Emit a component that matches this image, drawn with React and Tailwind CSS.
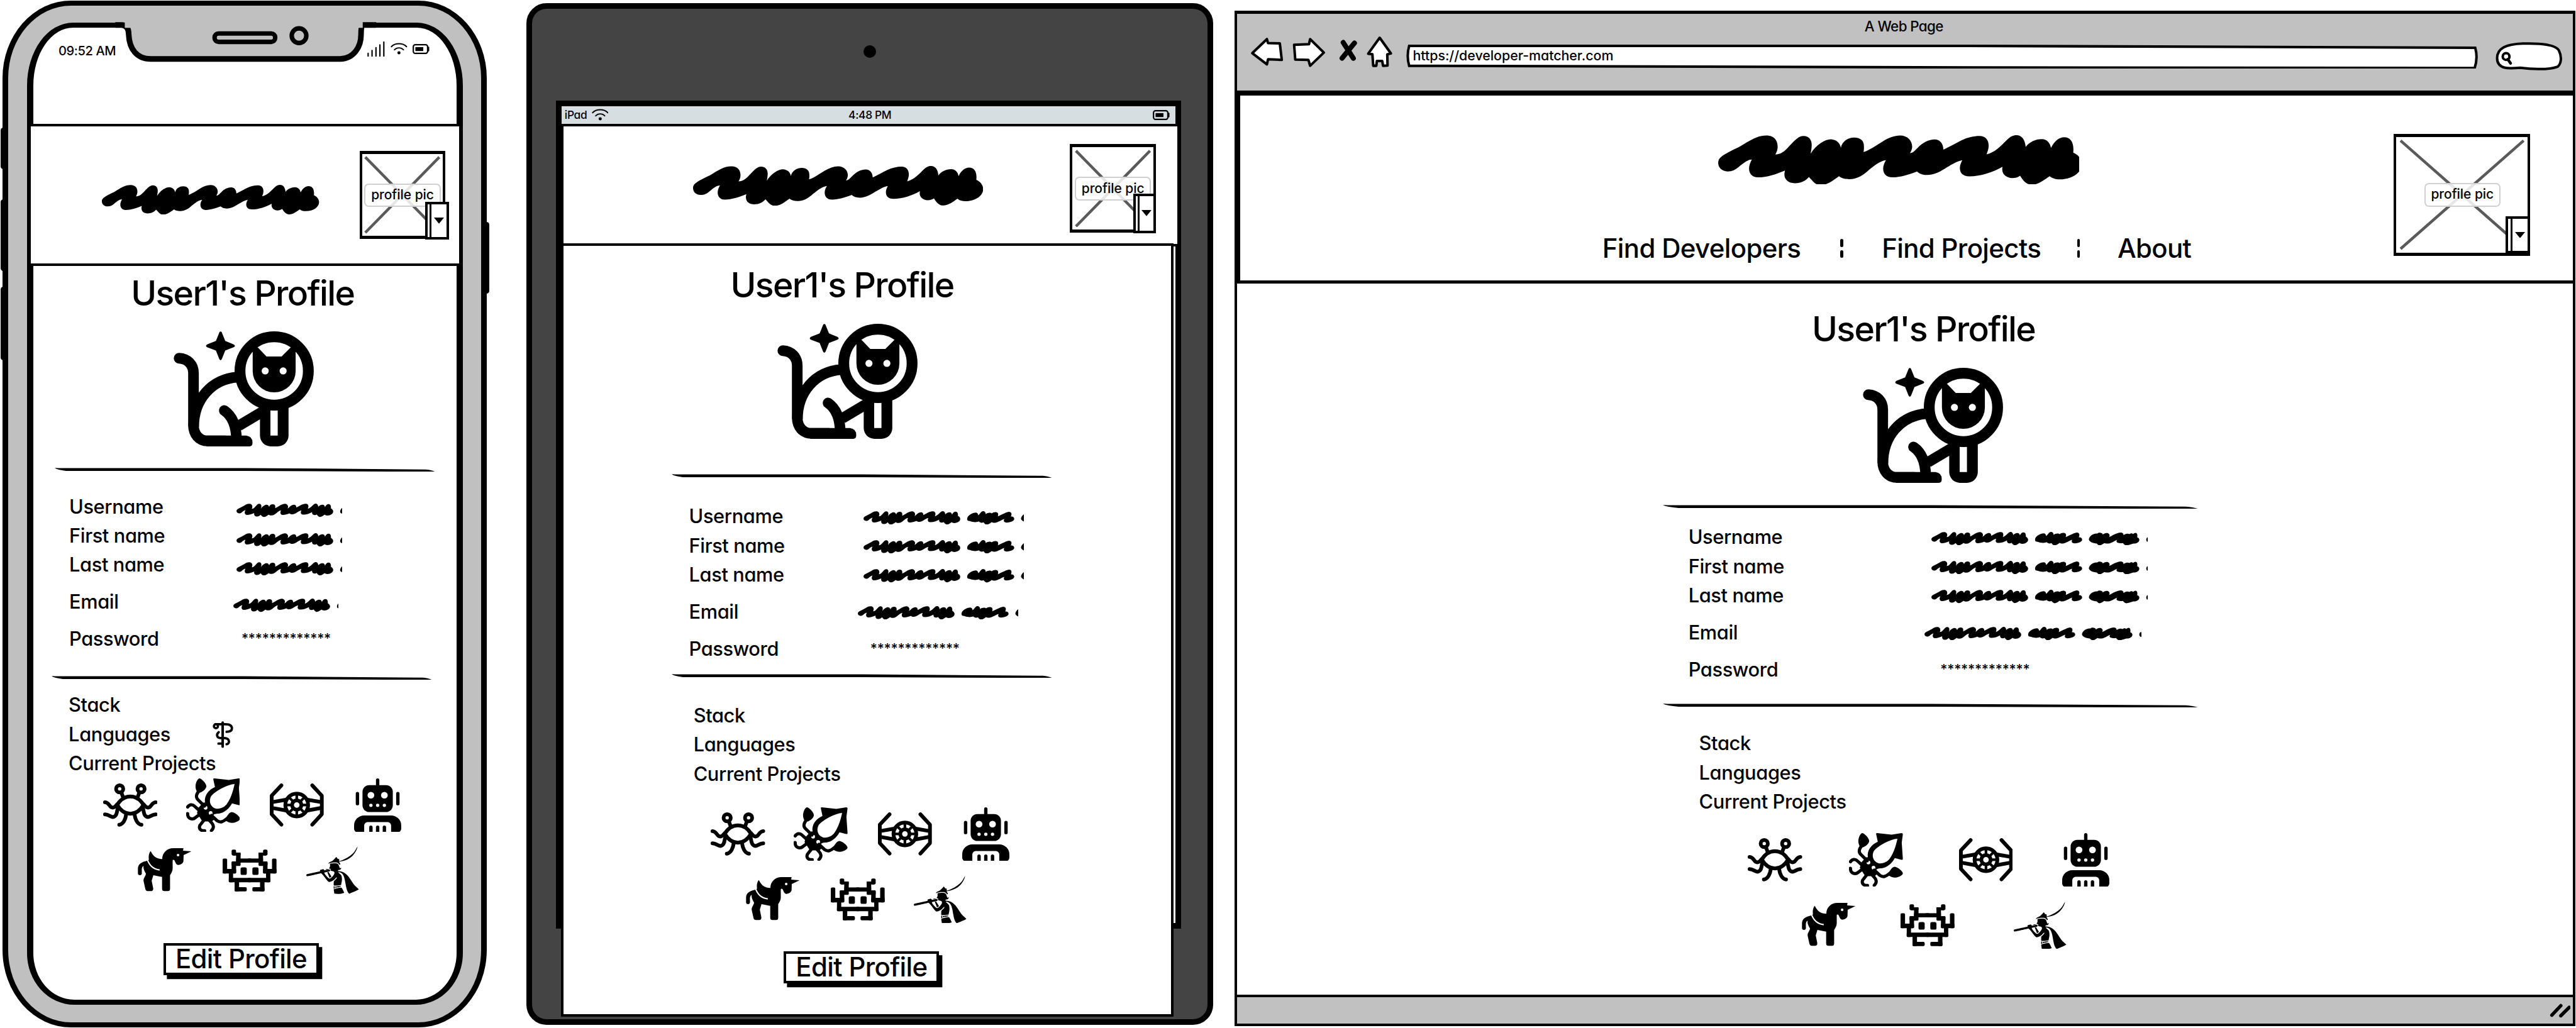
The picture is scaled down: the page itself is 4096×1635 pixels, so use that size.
import React from "react";
import { FaPiedPiperAlt } from "react-icons/fa";

/* ---------- scribbled placeholder text ---------- */

const SCRIBBLE =
  "M18 208 C18 180 40 165 130 122 C190 85 225 60 275 60 C320 60 336 90 336 120 C336 140 328 155 323 162 C350 162 370 150 400 115 C430 82 450 62 474 62 C505 62 518 85 518 110 C518 130 514 148 512 158 C540 110 590 80 620 80 C650 82 668 98 674 126 C680 90 715 71 745 71 C780 71 797 90 797 115 C798 130 797 140 795 149 C830 138 870 108 900 90 C930 72 960 60 990 60 C1030 60 1055 88 1055 120 C1055 135 1048 148 1043 155 C1060 155 1070 140 1085 126 C1110 98 1145 81 1175 81 C1205 81 1221 105 1222 136 C1260 118 1290 100 1320 85 C1350 70 1385 62 1415 62 C1448 62 1464 85 1464 115 C1464 135 1456 150 1453 162 C1500 150 1530 115 1560 85 C1580 65 1595 58 1613 58 C1640 58 1658 80 1662 122 C1680 95 1715 79 1747 79 C1775 79 1793 100 1797 127 C1815 90 1840 69 1868 69 C1900 69 1922 95 1916 152 C1945 165 1962 190 1962 215 C1962 260 1910 297 1843 297 C1820 297 1800 290 1790 280 C1760 300 1730 326 1694 326 C1665 326 1645 300 1632 277 C1620 286 1605 290 1590 290 C1555 288 1530 265 1538 229 C1490 258 1420 281 1361 281 C1325 280 1310 262 1310 235 C1310 220 1317 205 1323 193 C1290 200 1270 215 1240 232 C1210 252 1175 273 1135 273 C1110 273 1092 265 1081 254 C1040 270 990 286 950 286 C915 286 900 265 900 238 C900 220 908 205 915 193 C880 198 850 225 825 245 C795 272 765 296 718 296 C695 296 675 290 664 280 C635 300 605 328 565 328 C535 328 520 300 503 284 C485 305 460 318 428 318 C395 318 372 300 372 270 C372 262 374 254 375 249 C330 268 280 286 230 286 C200 286 183 265 183 238 C183 220 190 205 198 190 C175 190 155 208 130 228 C110 245 95 254 68 254 C40 254 18 235 18 208Z";

function TitleScribble({ className }) {
  return (
    <svg viewBox="18 58 1944 270" preserveAspectRatio="none" className={`block shrink-0 ${className}`}>
      <path d={SCRIBBLE} />
    </svg>
  );
}

function LineScribble({ className }) {
  return (
    <div className={`h-[24px] shrink-0 overflow-hidden ${className}`}>
      <svg viewBox="61 48 1200 72" className="block h-[24px] w-[400px]">
        <g transform="translate(56.2 32.5) scale(0.266)">
          <path d={SCRIBBLE} />
        </g>
        <path d="M615 90 C616 70 645 55 665 56 C672 58 675 66 674 70 C682 66 690 48 700 48 C712 48 715 58 714 64 C725 55 740 54 747 60 C755 52 775 50 780 60 C782 66 781 72 779 76 C800 66 830 50 840 51 C855 52 854 66 849 77 C860 76 867 82 867 90 C866 100 850 108 825 109 C812 109 808 100 814 90 C800 94 780 108 765 110 C757 111 750 109 746 107 C738 114 728 120 720 120 C710 119 706 112 703 108 C693 112 683 110 678 103 C665 109 645 107 630 101 C620 101 615 98 615 90Z" />
        <path d="M903 88 C906 68 930 55 948 57 C955 50 975 51 978 62 C985 54 1002 50 1010 58 C1016 64 1014 72 1011 76 C1025 70 1050 51 1075 51 C1088 52 1089 62 1088 66 C1098 56 1112 55 1120 60 C1130 52 1138 56 1139 60 C1150 48 1162 52 1162 64 C1163 72 1162 75 1161 77 C1170 80 1173 85 1173 92 C1170 106 1155 112 1142 110 C1130 112 1115 120 1103 120 C1092 118 1088 112 1086 108 C1070 110 1050 108 1051 98 C1051 95 1053 92 1055 90 C1040 95 1025 109 1008 110 C1000 111 990 110 985 108 C978 114 968 120 960 120 C952 119 948 112 945 110 C925 108 905 100 903 88Z" />
        <ellipse cx="1223" cy="89" rx="13" ry="13" />
      </svg>
    </div>
  );
}

/* ---------- icons ---------- */

function SpaceCat({ className }) {
  return (
    <svg viewBox="24 94 750 616" className={`block h-[205px] w-[250px] shrink-0 ${className}`}>
      <path d="M275 95 Q281 95 283 103 L300 145 L343 163 Q352 167 352 172 Q352 177 343 180 L300 197 L283 240 Q280 249 275 249 Q270 249 267 240 L250 197 L205 180 Q197 177 197 172 Q197 167 205 163 L250 145 L267 103 Q269 95 275 95Z" />
      <circle cx="562" cy="306" r="183" fill="none" stroke="black" strokeWidth="58" />
      <path d="M447 165 L475 181 L521 229 H602 L650 181 L677 165 V306 A115 115 0 0 1 447 306Z" />
      <circle cx="514" cy="306" r="19" fill="white" />
      <circle cx="610" cy="306" r="19" fill="white" />
      <g fill="none" stroke="black" strokeWidth="57">
        <path strokeLinecap="round" d="M53 238 C98 240 130 272 130 318 V596 C130 645 160 681 205 681 H300" />
        <path d="M131 605 C131 460 225 350 366 339" />
        <path strokeLinecap="round" d="M295 518 C338 548 360 600 360 675" />
        <path d="M372 600 L505 521" />
      </g>
      <path d="M200 652 H412 Q446 656 446 690 Q446 710 430 710 H200Z" />
      <path fillRule="evenodd" d="M486 490 H639 V652 A58 58 0 0 1 581 710 H544 A58 58 0 0 1 486 652Z M542 516 V652 H581 V516Z" />
    </svg>
  );
}

function NoodleCrab({ className = "" }) {
  const half = (
    <g>
      <circle cx="90" cy="112" r="19" />
      <path d="M100 134 L108 156" />
      <path d="M12 183 C36 184 34 212 53 212 C64 212 69 204 75 196" />
      <path d="M12 248 C32 248 40 262 53 262 C73 261 75 240 79 218" />
      <path d="M125 246 C122 272 110 301 88 303" />
    </g>
  );
  return (
    <svg viewBox="2 83 290 230" className={`block h-[77px] w-[97px] shrink-0 ${className}`}>
      <g fill="none" stroke="black" strokeWidth="20" strokeLinecap="round" strokeLinejoin="round">
        <path d="M77 197 C113 138 181 138 217 197 C181 260 113 260 77 197Z" />
        {half}
        <g transform="translate(294 0) scale(-1 1)">{half}</g>
      </g>
    </svg>
  );
}

function StaffIcon({ className }) {
  return (
    <svg viewBox="378 1286 37 48" className={`block h-[48px] w-[37px] shrink-0 ${className}`}>
      <g fill="none" stroke="black" strokeLinecap="round">
        <path strokeWidth="4.500" d="M396 1288.500 V1331.500" />
        <circle cx="384" cy="1295" r="3.600" strokeWidth="4" />
        <path strokeWidth="4.200" d="M383 1291.500 H401 C409 1291.500 412.500 1294 412.500 1299 C412.500 1303.500 408 1305 403 1305" />
        <path strokeWidth="4.200" d="M389 1305.500 C384.500 1309 385 1316 392 1316 H400 C409 1317 409 1326 403 1327" />
        <path strokeWidth="4.200" d="M388.500 1326 H396" />
      </g>
    </svg>
  );
}

function Squid({ className }) {
  return (
    <svg viewBox="447 54 288 288" className={`block h-[96px] w-[96px] shrink-0 ${className}`}>
      <path d="M517 54 C505 60 497 80 497 97 C497 112 503 122 508 130 L524 130 C540 122 553 110 555 97 C555 80 528 54 517 54Z" />
      <path d="M690 234 C710 236 735 260 735 269 C735 280 710 292 690 292 C675 290 665 285 652 276 C664 262 672 238 690 234Z" />
      <path d="M592 58 Q591 54 598 54 L675 62 L728 54 Q735 54 735 60 L729 105 L735 192 Q735 198 728 197 L692 188 C678 215 650 240 622 242 C602 242 590 246 594 254 L604 268 L584 284 L554 284 L534 284 L505 240 L512 212 L530 192 Q540 180 548 184 C542 146 566 116 601 100Z" />
      <path fill="white" d="M706 84 C670 86 605 118 580 150 C565 180 580 208 605 215 C630 220 655 205 665 190 C690 155 700 110 706 84Z" />
      <circle cx="551" cy="211" r="10" fill="white" />
      <circle cx="578" cy="239" r="10" fill="white" />
      <g fill="none" stroke="black" strokeWidth="17" strokeLinecap="round">
        <path d="M516 120 C496 146 500 158 512 170 L545 202" />
        <path d="M455 207 C464 194 480 191 491 202 L520 228" />
        <path d="M455 242 C454 272 482 276 496 264 L528 240" />
        <path d="M546 334 C516 336 512 312 526 298 L548 270" />
        <path d="M582 333 C598 318 594 302 582 290 L560 266" />
        <path d="M582 252 L612 280 C632 294 646 284 666 268" />
      </g>
    </svg>
  );
}

function TwinFighter({ className }) {
  const spokes = [0, 45, 90, 135, 180, 225, 270, 315];
  return (
    <svg viewBox="897 83 288 230" className={`block h-[77px] w-[96px] shrink-0 ${className}`}>
      <g fill="none" stroke="black" strokeWidth="20">
        <path strokeLinecap="round" strokeLinejoin="round" d="M959 93 L907 148 V247 L959 303" />
        <path strokeLinecap="round" strokeLinejoin="round" d="M1124 93 L1175 148 V247 L1124 303" />
        <path d="M907 183 L988 169 M907 213 L988 228 M1175 183 L1094 169 M1175 213 L1094 228" />
        <circle cx="1041" cy="198" r="61" />
        <circle cx="1041" cy="198" r="25" />
        {spokes.map((a) => (
          <path key={a} strokeWidth="14" d="M1041 170 V140" transform={`rotate(${a} 1041 198)`} />
        ))}
      </g>
    </svg>
  );
}

function RobotUser({ className }) {
  return (
    <svg viewBox="1347 54 252 288" className={`block h-[96px] w-[84px] shrink-0 ${className}`}>
      <g stroke="black" strokeWidth="18" strokeLinecap="round">
        <path d="M1473 63 V96 M1365 135 V189 M1581 135 V189" />
      </g>
      <rect x="1392" y="90" width="162" height="144" rx="36" />
      <g fill="white">
        <circle cx="1437" cy="144" r="18" />
        <circle cx="1509" cy="144" r="18" />
        <circle cx="1437" cy="198" r="9" />
        <circle cx="1473" cy="198" r="9" />
        <circle cx="1509" cy="198" r="9" />
      </g>
      <path d="M1401 252 H1545 A54 54 0 0 1 1599 306 V324 A18 18 0 0 1 1581 342 H1545 V306 A18 18 0 0 0 1527 288 H1419 A18 18 0 0 0 1401 306 V342 H1365 A18 18 0 0 1 1347 324 V306 A54 54 0 0 1 1401 252Z" />
      <path stroke="black" strokeWidth="18" strokeLinecap="round" d="M1437 315 V352 M1473 315 V352 M1509 315 V352" />
    </svg>
  );
}

function Unicorn({ className }) {
  return (
    <svg viewBox="188 430 290 232" className={`block h-[77px] w-[96px] shrink-0 ${className}`}>
      <path d="M320 488 C320 455 345 430 380 430 L434 430 L432 443 L477 447 L435 467 L434 500 C432 512 418 520 405 520 C392 518 390 502 386 496 C382 491 376 491 376 497 L376 540 C376 555 368 566 362 575 L362 648 Q362 661 350 661 L332 661 Q319 661 319 648 L319 585 L272 575 L263 605 L271 645 Q273 660 260 661 L242 661 Q232 661 229 650 L219 605 C219 590 232 578 232 567 C222 550 216 535 220 525 C208 530 210 545 210 560 L210 566 Q209 575 200 575 Q189 575 189 565 L189 540 C189 515 210 503 236 498 L248 492 L247 480 C247 465 252 450 258 446 C272 475 290 488 320 488Z" />
      <path d="M240 492 C252 526 274 543 306 547" fill="none" stroke="white" strokeWidth="7" />
      <circle cx="405" cy="467" r="7" fill="white" />
    </svg>
  );
}

function SpaceInvader({ className }) {
  const half = (
    <g>
      <rect x="693" y="434" width="24" height="32" rx="8" />
      <rect x="700" y="450" width="41" height="16" rx="4" />
      <rect x="717" y="450" width="24" height="54" rx="4" />
      <rect x="717" y="482" width="80" height="22" />
      <rect x="693" y="498" width="48" height="24" rx="5" />
      <rect x="693" y="498" width="24" height="64" rx="5" />
      <rect x="645" y="482" width="24" height="80" rx="7" />
      <rect x="645" y="538" width="72" height="24" rx="5" />
      <rect x="678" y="550" width="23" height="59" rx="5" />
      <rect x="678" y="586" width="120" height="23" rx="5" />
      <rect x="709" y="600" width="24" height="58" rx="5" />
      <rect x="709" y="635" width="65" height="23" rx="7" />
      <rect x="741" y="529" width="33" height="41" rx="9" />
    </g>
  );
  return (
    <svg viewBox="645 434 288 224" className={`block h-[75px] w-[96px] shrink-0 ${className}`}>
      {half}
      <g transform="translate(1578 0) scale(-1 1)">{half}</g>
    </svg>
  );
}

function Wifi({ className }) {
  return (
    <svg viewBox="0 0 30 22" className={`block h-[22px] w-[30px] shrink-0 ${className}`}>
      <g fill="none" stroke="black" strokeWidth="2.200" strokeLinecap="round">
        <path d="M1.500 7 C8 0 22 0 28.500 7" />
        <path d="M7 12.500 C11 8 19 8 23 12.500" />
      </g>
      <circle cx="15" cy="18" r="2.800" />
    </svg>
  );
}

function Battery({ className }) {
  return (
    <svg viewBox="0 0 30 18" className={`block h-[18px] w-[30px] shrink-0 ${className}`}>
      <rect x="1.300" y="1.300" width="25.500" height="15.400" rx="3.500" fill="none" stroke="black" strokeWidth="2.400" />
      <rect x="5" y="5.500" width="14" height="7" />
      <path d="M28.500 6 V12" stroke="black" strokeWidth="2.400" strokeLinecap="round" />
    </svg>
  );
}

/* ---------- shared wireframe parts ---------- */

function Rule({ className }) {
  return (
    <svg viewBox="0 0 678 7" preserveAspectRatio="none" className={`block h-[7px] shrink-0 ${className}`}>
      <path d="M0 0 Q8 1 20 0.500 L340 0.500 L662 3 Q672 4 678 7 Q665 7.500 650 7 L340 5.500 L20 5.500 Q5 4 0 0Z" />
    </svg>
  );
}

function ProfilePic({ size, label, menu }) {
  return (
    <div className={`relative flex shrink-0 border-x-[4.49px] border-y-[5.65px] border-black ${size}`}>
      <div className="absolute inset-[4px]">
        <svg viewBox="0 0 100 100" preserveAspectRatio="none" className="block h-full w-full">
          <path
            d="M1.500 1.500 L98.500 98.500 M98.500 1.500 L1.500 98.500"
            stroke="#5a5a5a"
            strokeWidth="5"
            fill="none"
            vectorEffect="non-scaling-stroke"
          />
        </svg>
      </div>
      <div className={`relative flex h-[42px] w-[136px] items-center justify-center rounded-[8px] border-[2.25px] border-[#d0d0d0] bg-white/85 text-[23.5px] leading-none tracking-[-0.002em] whitespace-nowrap ${label}`}>
        profile pic
      </div>
      <div className={`absolute flex border-[4.49px] border-black bg-white ${menu}`}>
        <div className="h-full w-[7px] border-r-[3.4px] border-black" />
        <div className="flex flex-1 items-center justify-center">
          <svg viewBox="0 0 18 11" className="block h-[11px] w-[18px]">
            <path d="M0 0 H18 L9 11Z" />
          </svg>
        </div>
      </div>
    </div>
  );
}

function Field({ label, children, className = "" }) {
  return (
    <div className={`flex h-[52px] ${className}`}>
      <span className="w-[200px] shrink-0 leading-[55px] whitespace-nowrap">{label}</span>
      {children}
    </div>
  );
}

function Fields({ className, value, emailValue, stars }) {
  return (
    <div className={`text-[34.5px] tracking-[-0.012em] ${className}`}>
      <Field label="Username">
        <LineScribble className={value} />
      </Field>
      <Field label="First name">
        <LineScribble className={value} />
      </Field>
      <Field label="Last name">
        <LineScribble className={value} />
      </Field>
      <Field label="Email" className="mt-[13.5px]">
        <LineScribble className={emailValue} />
      </Field>
      <Field label="Password" className="mt-[14px]">
        <span className={`text-[24px] leading-[55px] tracking-[-0.01em] whitespace-nowrap ${stars}`}>*************</span>
      </Field>
    </div>
  );
}

function StackList({ className, badge }) {
  return (
    <div className={`text-[34.5px] leading-[55px] tracking-[-0.012em] whitespace-nowrap ${className}`}>
      <div className="h-[52.2px]">Stack</div>
      <div className="flex h-[52.2px]">
        <span className="w-[257px]">Languages</span>
        {badge}
      </div>
      <div className="h-[52.2px]">Current Projects</div>
    </div>
  );
}

function Projects({ className, first, second, gaps }) {
  return (
    <div className={className}>
      <div className={`flex h-[96px] items-center ${first}`}>
        <NoodleCrab />
        <Squid className={gaps[0]} />
        <TwinFighter className={gaps[1]} />
        <RobotUser className={gaps[2]} />
      </div>
      <div className={`mt-[26px] flex h-[85px] ${second}`}>
        <Unicorn className="mt-[3px]" />
        <SpaceInvader className={`mt-[5px] ${gaps[3]}`} />
        <FaPiedPiperAlt preserveAspectRatio="none" className={`h-[85px] w-[96px] shrink-0 ${gaps[4]}`} />
      </div>
    </div>
  );
}

function Heading({ className }) {
  return (
    <h1 className={`h-[62px] text-[62px] leading-[64px] tracking-[-0.03em] whitespace-nowrap ${className}`}>User1's Profile</h1>
  );
}

function EditButton({ className }) {
  return (
    <button className={`block h-[57px] w-[277px] border-[4.49px] border-black bg-white text-[47px] leading-[47px] tracking-[-0.015em] whitespace-nowrap shadow-[6px_7px_0_0_#000] ${className}`}>
      Edit Profile
    </button>
  );
}

const NARROW_GAPS = ["ml-[51px]", "ml-[54px]", "ml-[54px]", "ml-[56px]", "ml-[51px]"];
const WIDE_GAPS = ["ml-[83px]", "ml-[100px]", "ml-[88px]", "ml-[80px]", "ml-[105px]"];

/* ---------- devices ---------- */

function Phone() {
  return (
    <div className="relative h-[1832px] w-[938px] shrink-0">
      <div className="absolute top-[228px] left-[1px] h-[74px] w-[10px] rounded-l-[5px] bg-black" />
      <div className="absolute top-[355px] left-[1px] h-[128px] w-[10px] rounded-l-[5px] bg-black" />
      <div className="absolute top-[511px] left-[1px] h-[131px] w-[10px] rounded-l-[5px] bg-black" />
      <div className="absolute top-[396px] left-[862px] h-[127px] w-[10px] rounded-r-[5px] bg-black" />
      <div className="relative mt-[1px] ml-[5px] h-[1830px] w-[862px] border-x-[10.1px] border-y-[9px] border-black bg-[#c0c0c0] [border-radius:122px/138px]">
        <div className="mt-[30px] ml-[33px] h-[1751px] w-[777px] border-x-[11.25px] border-y-[9px] border-black bg-white [border-radius:82px_82px_84px_84px/112px_112px_92px_92px]">
          <div className="flex h-[172px]">
            <span className="mt-[30px] ml-[45px] text-[22.5px] leading-[25px] tracking-[-0.02em] whitespace-nowrap">09:52 AM</span>
            <div className="mt-[25px] mr-[49px] ml-auto flex">
              <svg viewBox="0 0 31 27" className="block h-[27px] w-[31px]">
                <path
                  d="M1.500 21 V26 M8.500 16 V26 M15.500 11 V26 M22.500 6 V26 M29.500 1 V26"
                  stroke="black"
                  strokeWidth="2.400"
                  strokeLinecap="round"
                />
              </svg>
              <Wifi className="mt-[2px] ml-[10px]" />
              <Battery className="mt-[4px] ml-[9px]" />
            </div>
          </div>
          <div className="-mx-[9px] flex h-[253px] border-[4.49px] border-black bg-white">
            <TitleScribble className="mt-[104px] ml-[127px] h-[53px] w-[387px]" />
            <div className="mt-[43px] ml-[72px]">
              <ProfilePic size="h-[158px] w-[153px]" label="mt-[53px] ml-[4px]" menu="top-[86px] left-[112px] h-[67px] w-[43px]" />
            </div>
          </div>
          <Heading className="mt-[16px] ml-[174px]" />
          <SpaceCat className="mt-[39px] ml-[250px]" />
          <Rule className="mt-[38px] ml-[38px] w-[678px]" />
          <Fields
            className="mt-[34px] ml-[64px]"
            value="mt-[23px] ml-[98px] w-[188px]"
            emailValue="mt-[23px] ml-[92px] w-[188px]"
            stars="ml-[107px]"
          />
          <Rule className="mt-[42px] ml-[33px] w-[678px]" />
          <StackList className="mt-[17px] ml-[63px]" badge={<StaffIcon className="mt-[5px]" />} />
          <Projects className="mt-[2px]" first="ml-[124px]" second="ml-[186px]" gaps={NARROW_GAPS} />
          <EditButton className="mt-[87px] ml-[232px]" />
        </div>
        <svg viewBox="105 34 655 84" className="absolute top-[24px] left-[90px] block h-[84px] w-[655px]">
          <path d="M190 38 H212 Q229 44 229 62 C230 88 244 105 268 105 H606 C630 105 642 84 642 62 Q642 48 646 45 V38Z" fill="#c0c0c0" />
          <path
            d="M205 45 H216 Q229 45 229 62 C230 88 244 105.500 268 105.500 H606 C630 105 643 84 643 62 Q643 46 646 45 H670"
            fill="none"
            stroke="black"
            strokeWidth="10"
          />
          <rect x="222" y="36" width="424" height="14" fill="#c0c0c0" />
          <rect x="382" y="60" width="108" height="15" rx="7" fill="#c0c0c0" stroke="black" strokeWidth="8" />
          <circle cx="532.500" cy="64" r="13" fill="#c0c0c0" stroke="black" strokeWidth="8" />
        </svg>
      </div>
    </div>
  );
}

function Tablet() {
  return (
    <div className="h-[1832px] w-[1262px] shrink-0 pt-[6px]">
      <div className="relative h-[1821px] w-[1224px] rounded-[36px] border-[10.1px] border-black bg-[#444]">
        <div className="mx-auto mt-[65px] h-[22px] w-[22px] rounded-full bg-black" />
        <div className="mt-[76px] ml-[42px] h-[1476px] w-[1114px] border-[10.1px] border-black bg-white">
          <div className="relative flex h-[32px] items-center bg-[#d7dee1] text-[19.5px] leading-none tracking-[-0.02em]">
            <span className="ml-[6px] w-[48px]">iPad</span>
            <Wifi />
            <span className="mr-auto ml-auto pr-[48px] pl-[10px]">4:48 PM</span>
            <Battery className="mr-[10px]" />
          </div>
          <div className="-mx-[1px] flex h-[218px] w-[1103px] border-[4.49px] border-black bg-white">
            <TitleScribble className="mt-[70px] ml-[231px] h-[71px] w-[517px]" />
            <div className="mt-[31px] ml-[155px]">
              <ProfilePic size="h-[158px] w-[153px]" label="mt-[53px] ml-[4px]" menu="top-[83px] left-[108px] h-[70px] w-[41px]" />
            </div>
          </div>
          <div className="-mt-[5px] -ml-[1px] h-[1378px] w-[1092px] border-[4.49px] border-black bg-white">
            <Heading className="mt-[37px] ml-[298px]" />
            <SpaceCat className="mt-[40px] ml-[381px]" />
            <Rule className="mt-[62px] ml-[193px] w-[678px]" />
            <Fields
              className="mt-[41px] ml-[224px]"
              value="mt-[18px] ml-[111px] w-[286px]"
              emailValue="mt-[18px] ml-[101px] w-[286px]"
              stars="ml-[123px]"
            />
            <Rule className="mt-[21px] ml-[193px] w-[678px]" />
            <StackList className="mt-[39px] ml-[232px]" />
            <Projects className="mt-[35px]" first="ml-[263px]" second="ml-[325px]" gaps={NARROW_GAPS} />
            <EditButton className="mt-[50px] ml-[393px]" />
          </div>
        </div>
      </div>
    </div>
  );
}

function BrowserBar() {
  return (
    <div className="h-[137px] bg-[#c1c1c1]">
      <div className="h-[48px] pt-[8px] pr-[4px] text-center text-[25px] leading-[28px] tracking-[-0.025em]">A Web Page</div>
      <div className="-mt-[10px] flex">
        <svg viewBox="34 62 262 60" className="ml-[20px] block h-[60px] w-[262px] shrink-0">
          <g fill="white" stroke="black" strokeWidth="4.500" strokeLinejoin="round">
            <path d="M41 94 L67 69 L69 76 L90 76.500 L93.500 106 L69 105 L67 114Z" />
            <path d="M115.500 79 L142 78 L144 69 L168.500 93 L144 116.500 L141 106 L117.500 105.500Z" />
            <path d="M268 66.500 L288 94.500 L281.500 96 L282 116 L274 116.500 L272.500 108 H263 L262 116.500 L256.500 116.500 L255 96 L247.500 95Z" />
          </g>
          <path d="M203 75 L221 103 M223 76 L201 103" stroke="black" strokeWidth="9" strokeLinecap="round" />
        </svg>
        <div className="relative ml-[19px] h-[60px] w-[1911px] shrink-0">
          <svg viewBox="0 0 1911 60" className="absolute inset-0 block h-[60px] w-[1911px]">
            <path
              d="M5 19 L1000 19 L1905 22.500 Q1910 40 1904 58.500 L1000 57.500 L5 54.500 Q0 37 5 19Z"
              fill="white"
              stroke="black"
              strokeWidth="4.500"
            />
          </svg>
          <span className="relative ml-[12px] block pt-[22px] text-[24px] leading-[30px] tracking-[-0.002em]">https://developer-matcher.com</span>
        </div>
        <svg viewBox="0 0 122 56" className="mt-[9px] ml-[29px] block h-[56px] w-[122px] shrink-0">
          <path
            d="M4 32 C4 14 20 7 50 6 C85 5 108 8 114 18 C120 30 118 42 112 47 C95 54 60 51 45 49 C25 51 4 52 4 32Z"
            fill="white"
            stroke="black"
            strokeWidth="4.500"
          />
          <circle cx="20" cy="29" r="6" fill="none" stroke="black" strokeWidth="4.500" />
          <path d="M23 34 L28 41" stroke="black" strokeWidth="5" strokeLinecap="round" />
        </svg>
      </div>
    </div>
  );
}

function NavSeparator({ className }) {
  return (
    <div className={`flex w-[5px] flex-col gap-[6px] pt-[12px] ${className}`}>
      <div className="h-[14px] rounded-full bg-black" />
      <div className="h-[14px] rounded-full bg-black" />
    </div>
  );
}

function Browser() {
  return (
    <div className="h-[1832px] w-[2390px] shrink-0 pt-[19px]">
      <div className="flex h-[1810px] w-[2389px] flex-col border-[4.49px] border-t-[5.65px] border-black bg-white">
        <BrowserBar />
        <div className="-mr-[1px] flex h-[344px] shrink-0 border-t-[9px] border-b-[5.65px] border-l-[5.65px] border-black">
          <div className="w-[2054px] shrink-0">
            <div className="mt-[70px] ml-[852px] h-[87.5px] w-[643px] overflow-hidden">
              <TitleScribble className="h-[89px] w-[648px]" />
            </div>
            <nav className="mt-[86px] flex h-[56px] text-[47px] leading-[58px] tracking-[-0.015em] whitespace-nowrap">
              <a className="ml-[645px] w-[353px]">Find Developers</a>
              <NavSeparator className="ml-[71px]" />
              <a className="ml-[69px] w-[284px]">Find Projects</a>
              <NavSeparator className="ml-[64px]" />
              <a className="ml-[67px]">About</a>
            </nav>
          </div>
          <div className="mt-[68px] ml-[1px]">
            <ProfilePic size="h-[218px] w-[243px]" label="mt-[82px] ml-[50px]" menu="right-[-4.49px] bottom-[-1px] h-[67px] w-[43px]" />
          </div>
        </div>
        <div className="flex-1">
          <Heading className="mt-[48px] ml-[1024px]" />
          <SpaceCat className="mt-[40px] ml-[1115px]" />
          <Rule className="mt-[39px] ml-[758px] w-[954px]" />
          <Fields
            className="mt-[23px] ml-[804px]"
            value="mt-[18px] ml-[233px] w-[386px]"
            emailValue="mt-[18px] ml-[221px] w-[386px]"
            stars="ml-[249px]"
          />
          <Rule className="mt-[37px] ml-[758px] w-[954px]" />
          <StackList className="mt-[36px] ml-[823px]" />
          <Projects className="mt-[31px]" first="ml-[910px]" second="ml-[1006px]" gaps={WIDE_GAPS} />
        </div>
        <div className="flex h-[52px] shrink-0 items-center justify-end border-t-[4.49px] border-black bg-[#c1c1c1] pr-[4px]">
          <svg viewBox="0 0 38 26" className="block h-[26px] w-[38px]">
            <path d="M4 22 L20 5 M20 23 L35 8" stroke="black" strokeWidth="6" strokeLinecap="round" />
          </svg>
        </div>
      </div>
    </div>
  );
}

export default function App() {
  return (
    <main className="flex h-[1832px] w-[4590px] overflow-hidden bg-white font-['Inter','Lato',sans-serif] font-medium text-black [font-feature-settings:'cv11'] [zoom:0.89237]">
      <Phone />
      <Tablet />
      <Browser />
    </main>
  );
}
